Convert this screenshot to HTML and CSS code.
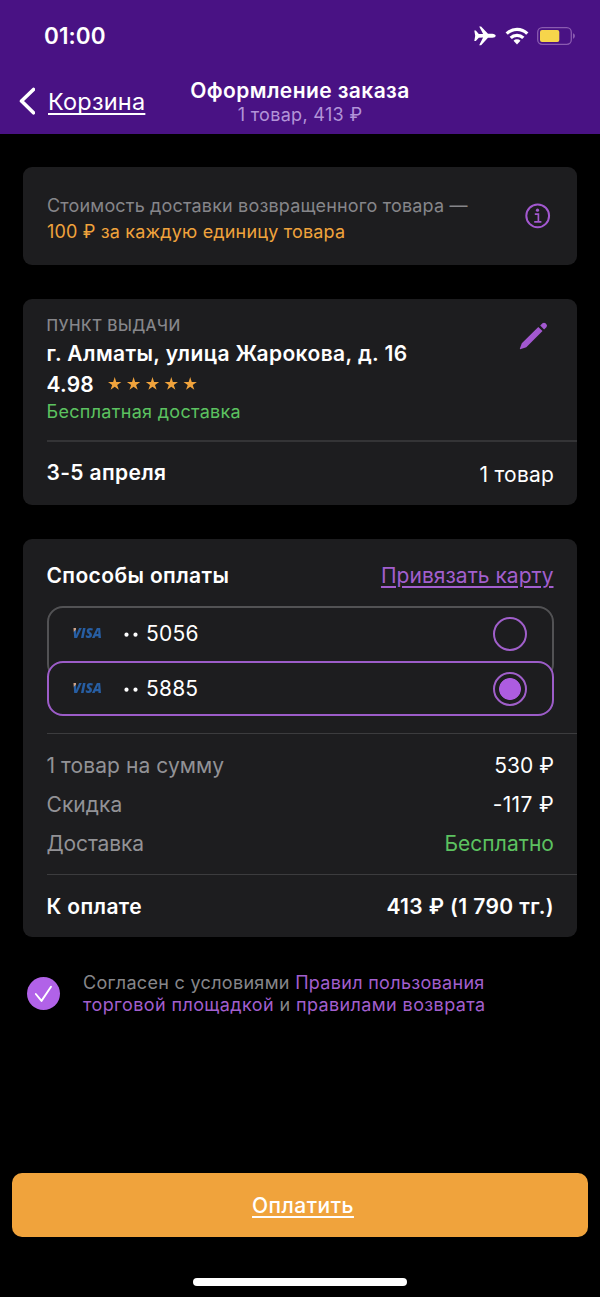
FILE: index.html
```html
<!DOCTYPE html>
<html lang="ru">
<head>
<meta charset="utf-8">
<title>Оформление заказа</title>
<link rel="stylesheet" href="styles.css">
</head>
<body>
<div class="screen">
  <header class="header">
    <div class="status">
      <span class="clock">01:00</span>
      <div class="status-icons">
        <svg class="plane" viewBox="0 0 22 20" width="22" height="20"><path fill="#fff" d="M0.300 4.600h1.500l3 3.400 4.300.1L5.200 .5h1.900l6.900 7.200h4.300c1.900 0 3.400 1 3.400 2s-1.500 2-3.400 2h-4.300l-6.900 7.500H5.200l3.900-7.600-4.300.1-3 3.400H.3l.9-5.400z"/></svg>
        <svg class="wifi" viewBox="0 0 24 18" width="24" height="18"><g fill="none" stroke="#fff" stroke-width="3.300"><path d="M1.700 6.700a14.600 14.600 0 0 1 20.600 0"/><path d="M5.700 10.900a9 9 0 0 1 12.600 0"/></g><path fill="#fff" d="M8.500 13.700a5 5 0 0 1 7 0L12 17.500z"/></svg>
        <svg class="battery" viewBox="0 0 39 18" width="39" height="18"><rect x=".7" y=".7" width="33.600" height="16.600" rx="4.500" fill="none" stroke="#8a5bb0" stroke-width="1.300"/><rect x="3" y="3" width="19.300" height="12" rx="2" fill="#f7d54b"/><path d="M36 6.300c2.600.7 2.600 4.700 0 5.400z" fill="#8a5bb0"/></svg>
      </div>
    </div>
    <div class="nav">
      <a class="back">
        <svg viewBox="0 0 18 28" width="18" height="28"><path d="M16.500 2.500 4.500 14l12 11.800" fill="none" stroke="#fff" stroke-width="3.600" stroke-linecap="round" stroke-linejoin="round"/></svg>
        <span class="back-text">Корзина</span>
      </a>
      <div class="heading">
        <div class="title">Оформление заказа</div>
        <div class="subtitle">1 товар, 413 ₽</div>
      </div>
    </div>
  </header>

  <main class="content">
    <section class="card notice">
      <div class="notice-text">
        <div class="line-a">Стоимость доставки возвращенного товара —</div>
        <div class="line-b">100 ₽ за каждую единицу товара</div>
      </div>
      <svg class="info" viewBox="0 0 26 26" width="26" height="26"><circle cx="12.700" cy="12.800" r="11.400" fill="none" stroke="#a258cf" stroke-width="2"/><circle cx="12.500" cy="7.200" r="1.600" fill="#a258cf"/><path d="M9.800 11.100h3.600v7.600M9.200 18.800h7.200" fill="none" stroke="#a258cf" stroke-width="1.700"/></svg>
    </section>

    <section class="card pickup">
      <div class="pickup-top">
        <div>
          <div class="caption">ПУНКТ ВЫДАЧИ</div>
          <div class="address">г. Алматы, улица Жарокова, д. 16</div>
          <div class="rating">
            <span class="score">4.98</span>
            <svg class="stars" viewBox="0 0 90 14" width="90" height="14"><defs><path id="s" fill="#f0a33c" d="M6.700 0l1.550 4.900h5.100L9.200 7.900l1.600 4.900-4.100-3-4.100 3 1.600-4.900L0 4.900h5.150z"/></defs><use href="#s"/><use href="#s" x="18.900"/><use href="#s" x="37.800"/><use href="#s" x="56.600"/><use href="#s" x="75.500"/></svg>
          </div>
          <div class="free">Бесплатная доставка</div>
        </div>
        <svg class="pencil" viewBox="0 0 30 30" width="30" height="30"><path fill="#a258cf" d="M1.200 28.300q-.5-.2-.3-.8L2.800 22.300 19.300 5.900l4.200 4.200L7.300 26.200zM21.200 4.600l2.300-2.300q1.500-1.300 3 0l.9.900q1.300 1.500 0 3l-2.300 2.300z"/></svg>
      </div>
      <div class="shipment">
        <span class="date">3-5 апреля</span>
        <span class="count">1 товар</span>
      </div>
    </section>

    <section class="card payment">
      <div class="pay-head">
        <span class="pay-title">Способы оплаты</span>
        <a class="pay-link">Привязать карту</a>
      </div>
      <div class="methods">
        <div class="method">
          <span class="visa">VISA</span><svg class="dots" viewBox="0 0 14 34" width="14" height="34"><circle cx="2.500" cy="17.700" r="2.100" fill="#fff"/><circle cx="11.500" cy="17.700" r="2.100" fill="#fff"/></svg><span class="num">5056</span><span class="radio"></span>
        </div>
        <div class="method selected">
          <span class="visa">VISA</span><svg class="dots" viewBox="0 0 14 34" width="14" height="34"><circle cx="2.500" cy="17.700" r="2.100" fill="#fff"/><circle cx="11.500" cy="17.700" r="2.100" fill="#fff"/></svg><span class="num">5885</span><span class="radio"></span>
        </div>
      </div>
      <div class="sums">
        <div class="sum"><span class="label">1 товар на сумму</span><span class="val">530 ₽</span></div>
        <div class="sum"><span class="label">Скидка</span><span class="val discount">-117 ₽</span></div>
        <div class="sum"><span class="label tight">Доставка</span><span class="val green">Бесплатно</span></div>
      </div>
      <div class="total"><span>К оплате</span><span>413 ₽ (1 790 тг.)</span></div>
    </section>

    <div class="agree">
      <svg class="check" viewBox="0 0 34 34" width="34" height="34"><circle cx="16.500" cy="16.600" r="16.500" fill="#b162e8"/><path d="M8.800 17l5.700 6.900L24 9.700" fill="none" stroke="#fff" stroke-width="1.900" stroke-linecap="round" stroke-linejoin="round"/></svg>
      <div class="agree-text">
        <div>Согласен с условиями <a>Правил пользования</a></div>
        <div class="second"><a>торговой площадкой</a> и <a>правилами возврата</a></div>
      </div>
    </div>
  </main>

  <footer class="footer">
    <div class="pay-button"><span class="pay-text">Оплатить</span></div>
    <div class="home"></div>
  </footer>
</div>
</body>
</html>
```
FILE: styles.css
```css
* { box-sizing: border-box; }
body { margin: 0; background: #000; font-family: Inter, "Liberation Sans", sans-serif; color: #fff; }
.screen { width: 600px; height: 1297px; background: #000; display: flex; flex-direction: column; overflow: hidden; white-space: nowrap; }
svg { display: block; flex: none; }

.header { height: 134px; background: #491284; flex: none; }
.status { display: flex; justify-content: space-between; padding: 24px 24px 0 44px; height: 74px; }
.clock { font-size: 22.500px; font-weight: 600; line-height: 24px; letter-spacing: 0.1px; }
.status-icons { display: flex; align-items: center; height: 24px; }
.wifi { margin-left: 9px; }
.battery { margin-left: 8px; }
.nav { display: grid; grid-template-columns: 180px 240px 180px; }
.back { display: flex; padding: 13px 0 0 17px; }
.back-text { font-size: 23.500px; line-height: 28px; letter-spacing: 0.2px; margin: 1px 0 0 13px; text-decoration: underline; text-decoration-thickness: 1.500px; text-underline-offset: 3px; text-decoration-skip-ink: none; }
.heading { text-align: center; }
.title { font-size: 21px; font-weight: 600; line-height: 28px; padding-top: 3px; letter-spacing: 0.4px; }
.subtitle { font-size: 18px; line-height: 19px; color: #b294d8; letter-spacing: 0.32px; }

.content { padding: 33px 23px 0; flex: 1; }
.card { background: #1d1d1f; border-radius: 9px; overflow: hidden; }
.notice { height: 98px; display: flex; justify-content: space-between; padding: 26px 26px 0 24px; }
.notice-text { font-size: 18px; line-height: 25.500px; color: #86868a; letter-spacing: 0.17px; }
.line-b { color: #f0a33c; }
.info { margin-top: 10px; }

.pickup { margin-top: 33.500px; height: 206.500px; padding-left: 23.500px; }
.pickup-top { height: 143.500px; display: flex; justify-content: space-between; padding: 16.500px 28px 0 0; border-bottom: 2px solid #343436; }
.caption { font-size: 15.500px; font-weight: 500; line-height: 22px; color: #86868a; letter-spacing: 0.45px; }
.address { font-size: 21px; font-weight: 600; line-height: 32px; margin-top: 1px; letter-spacing: 0.4px; }
.rating { display: flex; align-items: center; height: 28px; }
.score { font-size: 21px; font-weight: 600; line-height: 28px; width: 61px; padding-top: 1px; letter-spacing: 0.2px; }
.free { font-size: 18px; line-height: 26px; color: #5cc260; margin-top: 1px; letter-spacing: 0.3px; }
.pencil { margin-top: 6px; }
.shipment { display: flex; justify-content: space-between; padding: 17px 23px 0 0; line-height: 28px; }
.date { font-size: 21px; font-weight: 600; letter-spacing: 0.35px; }
.count { font-size: 21px; padding-top: 2px; letter-spacing: 0.2px; }

.payment { margin-top: 34px; height: 398px; padding-left: 23.500px; }
.pay-head { display: flex; justify-content: space-between; padding: 23px 23.500px 0 0; height: 67px; line-height: 28px; font-size: 21px; }
.pay-title { font-weight: 600; letter-spacing: 0.38px; }
.pay-link { color: #a25fce; letter-spacing: 0.02px; text-decoration: underline; text-decoration-thickness: 1.500px; text-underline-offset: 3px; }
.methods { margin-right: 23px; height: 127px; display: flex; flex-direction: column; }
.method { height: 74px; flex: none; display: flex; align-items: flex-start; border: 2px solid #525254; border-radius: 16px; padding: 9px 25px 0 24px; background: #1d1d1f; }
.method.selected { height: 55px; margin-top: -19px; border-color: #9c5cc8; }
.visa { width: 51px; font: italic 800 13.500px/32px "Open Sans", sans-serif; letter-spacing: -0.1px; background: linear-gradient(135deg, #d0a58a 0 10.500px, #275ea3 11.500px); color: transparent; -webkit-background-clip: text; background-clip: text; }
.dots { margin-right: 8.500px; }
.num { font-size: 21px; line-height: 34px; flex: 1; letter-spacing: 0.2px; }
.radio { width: 34px; height: 34px; border: 2px solid #a05fca; border-radius: 50%; }
.selected .radio { background: radial-gradient(circle, #ad5ce0 10.500px, transparent 11.300px); }
.sums { border-top: 1px solid #3c3c3e; border-bottom: 1px solid #3c3c3e; padding: 12px 23px 0 0; height: 142px; }
.sum { display: flex; justify-content: space-between; line-height: 39px; font-size: 21px; }
.label { color: #929296; letter-spacing: 0.07px; }
.label.tight { letter-spacing: -0.13px; }
.val { letter-spacing: 0.05px; }
.val.discount { letter-spacing: 0.35px; }
.green { color: #5cc260; }
.total { display: flex; justify-content: space-between; padding: 17px 23px 0 0; line-height: 30px; font-size: 21px; font-weight: 600; letter-spacing: 0.38px; }

.agree { display: flex; margin-top: 35px; padding-left: 3.500px; }
.check { margin-top: 4.500px; }
.agree-text { margin-left: 22.500px; font-size: 18px; line-height: 22.300px; color: #86868a; letter-spacing: 0.31px; }
.second { letter-spacing: 0.39px; }
.agree-text a { color: #a25fce; }

.footer { height: 124px; padding: 0 12px; flex: none; }
.pay-button { height: 64px; background: #f0a33c; border-radius: 10px; display: flex; justify-content: center; padding: 19px 0 0 6px; }
.pay-text { font-size: 21px; font-weight: 500; line-height: 28px; letter-spacing: 0.47px; text-decoration: underline; text-decoration-thickness: 2px; text-underline-offset: 3px; text-decoration-skip-ink: none; }
.home { width: 214px; height: 8px; border-radius: 4px; background: #fff; margin: 41px auto 0; }
```
